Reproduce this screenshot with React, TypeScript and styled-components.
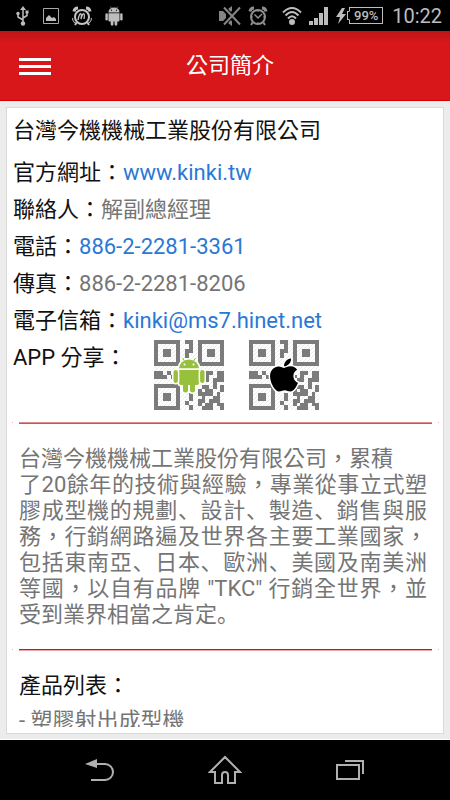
import React from "react";
import styled, { createGlobalStyle } from "styled-components";
import { FaApple } from "react-icons/fa";

const GlobalStyle = createGlobalStyle`
  *, *::before, *::after { box-sizing: border-box; }
  body {
    margin: 0;
    background: #000;
    font-family: Roboto, "Noto Sans CJK TC", sans-serif;
  }
`;

const Screen = styled.div`
  display: flex;
  flex-direction: column;
  height: 100vh;
`;

const StatusBar = styled.div`
  display: flex;
  flex: none;
  align-items: center;
  justify-content: space-between;
  height: 31px;
  padding: 0 8px 0 14px;
  background: #000;
  color: #bdbdbd;
`;

const StatusGroup = styled.div<{ $gap: number }>`
  display: flex;
  align-items: center;
  gap: ${(p) => p.$gap}px;
  svg { display: block; }
`;

const Battery = styled.span`
  display: flex;
  align-items: center;
  svg { margin-right: 3px; }
`;

const BatteryLevel = styled.span`
  position: relative;
  width: 34px;
  height: 17px;
  margin-right: 2px;
  border: 1px solid #bdbdbd;
  font-size: 13px;
  font-weight: 500;
  line-height: 15px;
  text-align: center;
  &::before {
    content: "";
    position: absolute;
    left: -3px;
    top: 3px;
    width: 3px;
    height: 9px;
    border: 1px solid #bdbdbd;
    border-right-color: #000;
    background: #000;
  }
`;

const Clock = styled.time`
  font-size: 20px;
  line-height: 24px;
`;

const AppBar = styled.header`
  display: flex;
  flex: none;
  align-items: center;
  gap: 10px;
  height: 70px;
  padding: 1px 51px 0 19px;
  border-bottom: 1px solid #d40000;
  background: linear-gradient(#bd1517, #d71719 12px);
`;

const MenuButton = styled.button`
  display: flex;
  flex-direction: column;
  flex: none;
  gap: 4px;
  width: 32px;
  padding: 0;
  border: 0;
  background: none;
`;

const MenuBar = styled.span`
  height: 3px;
  background: #fff;
`;

const Title = styled.h1`
  flex: 1;
  margin: 0;
  color: #fff;
  font-size: 22px;
  font-weight: 400;
  line-height: 32px;
  text-align: center;
`;

const Page = styled.main`
  display: flex;
  flex: 1;
  min-height: 0;
  padding: 6px 6px 5px 6px;
  border-bottom: 1px solid #fff;
  background: #ececec;
`;

const Card = styled.section`
  display: flex;
  flex: 1;
  min-width: 0;
  padding-bottom: 6px;
  border: 1px solid #dadada;
  background: #fff;
`;

const Scroller = styled.div`
  flex: 1;
  min-width: 0;
  overflow-y: auto;
  scrollbar-width: none;
  padding: 4px 5px 0 6px;
  color: #757575;
  font-size: 22px;
`;

const CompanyName = styled.h2`
  margin: 0 0 5px;
  color: #111;
  font-size: 22px;
  font-weight: 400;
  line-height: 37px;
`;

const Details = styled.dl`
  margin: 0;
`;

const DetailRow = styled.div`
  display: flex;
  line-height: 37px;
`;

const Label = styled.dt`
  color: #111;
`;

const Value = styled.dd`
  margin: 0;
`;

const Link = styled.a`
  color: #2a78d6;
  text-decoration: none;
`;

const ShareCodes = styled.dd`
  display: flex;
  gap: 25px;
  margin: 1px 0 0 27px;
`;

const CodeFrame = styled.span`
  position: relative;
  width: 70px;
  height: 70px;
  > svg { display: block; }
`;

const CodeLogo = styled.span`
  position: absolute;
  inset: 0;
  display: flex;
  align-items: center;
  justify-content: center;
  color: #000;
  svg {
    overflow: visible;
    stroke: #fff;
    paint-order: stroke;
  }
`;

const Divider = styled.div<{ $top: number }>`
  display: flex;
  gap: 7px;
  height: 2px;
  margin-top: ${(p) => p.$top}px;
  &::before, &::after {
    content: "";
    width: 1px;
    height: 1px;
    margin: 0 -1px;
    background: #f0b0b0;
  }
`;

const DividerLine = styled.span<{ $line: string; $shade: string }>`
  flex: 1;
  border-top: 1px solid ${(p) => p.$line};
  border-bottom: 1px solid ${(p) => p.$shade};
`;

const About = styled.p`
  margin: 22px 11px 0 6px;
  line-height: 26px;
  text-align: justify;
`;

const Mark = styled.span`
  font-family: Roboto, "Noto Sans CJK JP", sans-serif;
`;

const ProductsTitle = styled.h3`
  margin: 20px 6px 7px;
  color: #111;
  font-size: 22px;
  font-weight: 400;
  line-height: 30px;
`;

const Products = styled.ul`
  margin: 0 6px;
  padding: 0;
  list-style: none;
  line-height: 26px;
`;

const NavBar = styled.nav`
  display: grid;
  flex: none;
  grid-template-columns: repeat(3, 1fr);
  height: 60px;
  padding: 0 38px;
  background: #000;
`;

const NavButton = styled.button`
  display: flex;
  align-items: center;
  justify-content: center;
  padding: 0;
  border: 0;
  background: none;
`;

const Robot = ({ width, height, eye }: { width: number; height: number; eye: string }) => (
  <svg width={width} height={height} viewBox="0 0 32 36" fill="currentColor" strokeWidth="3">
    <path d="M6 11.500a10 9 0 0 1 20 0Z" />
    <path d="M6 13H26V26a2 2 0 0 1-2 2H22v5a2 2 0 0 1-5 0V28H15v5a2 2 0 0 1-5 0V28H8a2 2 0 0 1-2-2Z" />
    <rect x="0.500" y="13" width="4.400" height="13" rx="2.200" />
    <rect x="27.100" y="13" width="4.400" height="13" rx="2.200" />
    <path d="M9.500 1l2.500 4M22.500 1l-2.500 4" style={{ stroke: "currentColor" }} strokeWidth="1" />
    <g fill={eye} style={{ stroke: "none" }}>
      <circle cx="11.500" cy="7.500" r="1" />
      <circle cx="20.500" cy="7.500" r="1" />
    </g>
  </svg>
);

const UsbIcon = () => (
  <svg width="16" height="20" viewBox="0 0 16 20" fill="none" stroke="#bdbdbd" strokeWidth="1.500">
    <path d="M9 3V17M9 14L4 11V8M9 12L13 9.500V6" />
    <path d="M9 0l3 4H6Z" fill="#bdbdbd" stroke="none" />
    <circle cx="9" cy="17.500" r="2.200" fill="#bdbdbd" stroke="none" />
    <circle cx="4" cy="7.500" r="1.700" fill="#bdbdbd" stroke="none" />
    <path d="M11.500 4.500h3v3h-3z" fill="#bdbdbd" stroke="none" />
  </svg>
);

const PictureIcon = () => (
  <svg width="16" height="16" viewBox="0 0 16 16">
    <path d="M.5.5h15v15H.5z" fill="none" stroke="#a8a8a8" />
    <path d="M3 13V10l3-3 3 3 2-1 2 2v2Z" fill="#bdbdbd" />
  </svg>
);

const AlarmIcon = ({ promo }: { promo?: boolean }) => (
  <svg width="20" height="20" viewBox="0 0 20 20" fill="none" stroke={promo ? "#c4c4c4" : "#8f8f8f"} strokeWidth="2">
    <circle cx="10" cy="11" r="7" />
    <path d="M2 5.500A4 4 0 0 1 6 2M18 5.500A4 4 0 0 0 14 2" strokeWidth="3" />
    <path d="M4.500 16.500L3 19M15.500 16.500L17 19" />
    {promo ? (
      <>
        <path d="M6 14C7 9 8 7 9 8s0 4 0 5c1-4 2-6 3-5s0 4 0 5" strokeWidth="1.300" />
        <path d="M.7 12v2l2 3M19.300 12v2l-2 3" strokeWidth="1" />
      </>
    ) : (
      <>
        <path d="M6.500 8.500L10 12l4-4" strokeWidth="1.500" />
        <path d="M10 5v1M10 16v1M4 11h1M15 11h1" strokeWidth="1" />
      </>
    )}
  </svg>
);

const MuteIcon = () => (
  <svg width="22" height="20" viewBox="0 0 22 20" fill="#858585">
    <path d="M0 5H4L7 8V12L4 15H0ZM9 3l4-3v5l-2 1ZM9 17l4 3v-5l-2-1Z" />
    <path d="M5 1.500L21 18.500M21 1.500L5 18.500" stroke="#000" strokeWidth="4" />
    <path d="M5 1.500L21 18.500M21 1.500L5 18.500" stroke="#858585" strokeWidth="2" />
  </svg>
);

const WifiIcon = () => (
  <svg width="20" height="20" viewBox="0 0 20 20" fill="none" stroke="#bdbdbd" strokeWidth="2">
    <path d="M1 6.500Q10-2.500 19 6.500M3.500 9.500Q10 2.500 16.500 9.500M6 12.500Q10 8 14 12.500" />
    <circle cx="10" cy="16" r="3" fill="#bdbdbd" stroke="none" />
  </svg>
);

const SignalIcon = () => (
  <svg width="20" height="18" viewBox="0 0 20 18" fill="#bdbdbd">
    <path d="M0 14h4v4H0zM5 11h4v7H5zM10 6h4v12h-4zM15 0h4v18h-4z" />
  </svg>
);

const BoltIcon = () => (
  <svg width="10" height="16" viewBox="0 0 10 16" fill="#bdbdbd">
    <path d="M6 0L0 9h4L2 16 10 6H6L9 0Z" />
  </svg>
);

const modules = [
  "..##.##",
  "#.#..##",
  ".##.###",
  "....#..",
  ".##.#.#",
  "#.##..#",
  "####.#.",
  ".#..##.",
  "##.###.",
  "#.##.##",
  ".###..#",
];

const Finder = ({ x, y }: { x: number; y: number }) => (
  <g>
    <path d={`M${x + 2} ${y + 2}h22v22h-22z`} fill="none" stroke="#7b7b7b" strokeWidth="4" />
    <path d={`M${x + 9} ${y + 9}h8v8h-8z`} />
  </g>
);

const QrCode = ({ id }: { id: string }) => (
  <svg width="70" height="70" viewBox="0 0 70 70" fill="#7b7b7b">
    <pattern id={id} width="4" height="4" patternUnits="userSpaceOnUse">
      <path d="M0 4L4 0" stroke="#eaeaea" strokeWidth="1" />
    </pattern>
    <path d="M0 0h70v70H0z" fill={`url(#${id})`} />
    <Finder x={0} y={0} />
    <Finder x={44} y={0} />
    <Finder x={0} y={44} />
    <path d="M31 0h8v13h-4v5h-4V9h4V4h-4z" />
    <path d="M0 31h9v4h4v4H0zM13 31h4v4h-4zM17 35h3v4h-3z" />
    <path d="M35 53h4v5h-4zM31 61h4v4h-4zM35 65h4v5h-4zM35 57h4v4h-4z" />
    <g shapeRendering="crispEdges">
      {modules.map((row, r) =>
        [...row].map((m, c) =>
          m === "#" ? (
            <rect
              key={`${r}-${c}`}
              x={44 + (c * 26) / 7}
              y={31 + (r * 39) / 11}
              width={26 / 7}
              height={39 / 11}
            />
          ) : null
        )
      )}
    </g>
  </svg>
);

const GreenRobot = styled.span`
  display: flex;
  color: #97c03d;
`;

export default function App() {
  return (
    <Screen>
      <GlobalStyle />
      <StatusBar>
        <StatusGroup $gap={13}>
          <UsbIcon />
          <PictureIcon />
          <AlarmIcon promo />
          <Robot width={18} height={20} eye="#000" />
        </StatusGroup>
        <StatusGroup $gap={7}>
          <MuteIcon />
          <AlarmIcon />
          <span />
          <WifiIcon />
          <SignalIcon />
          <Battery>
            <BoltIcon />
            <BatteryLevel>99%</BatteryLevel>
          </Battery>
          <Clock>10:22</Clock>
        </StatusGroup>
      </StatusBar>

      <AppBar>
        <MenuButton aria-label="選單">
          <MenuBar />
          <MenuBar />
          <MenuBar />
        </MenuButton>
        <Title>公司簡介</Title>
      </AppBar>

      <Page>
        <Card>
          <Scroller>
            <CompanyName>台灣今機機械工業股份有限公司</CompanyName>
            <Details>
              <DetailRow>
                <Label>官方網址：</Label>
                <Value><Link href="http://www.kinki.tw">www.kinki.tw</Link></Value>
              </DetailRow>
              <DetailRow>
                <Label>聯絡人：</Label>
                <Value>解副總經理</Value>
              </DetailRow>
              <DetailRow>
                <Label>電話：</Label>
                <Value><Link href="tel:886-2-2281-3361">886-2-2281-3361</Link></Value>
              </DetailRow>
              <DetailRow>
                <Label>傳真：</Label>
                <Value>886-2-2281-8206</Value>
              </DetailRow>
              <DetailRow>
                <Label>電子信箱：</Label>
                <Value><Link href="mailto:kinki@ms7.hinet.net">kinki@ms7.hinet.net</Link></Value>
              </DetailRow>
              <DetailRow>
                <Label>APP 分享：</Label>
                <ShareCodes>
                  <CodeFrame>
                    <QrCode id="hatch-android" />
                    <CodeLogo>
                      <GreenRobot><Robot width={32} height={36} eye="#fff" /></GreenRobot>
                    </CodeLogo>
                  </CodeFrame>
                  <CodeFrame>
                    <QrCode id="hatch-apple" />
                    <CodeLogo>
                      <FaApple size={38} strokeWidth={40} />
                    </CodeLogo>
                  </CodeFrame>
                </ShareCodes>
              </DetailRow>
            </Details>

            <Divider $top={12}><DividerLine $line="#e08a8c" $shade="#d25053" /></Divider>

            <About>
              台灣今機機械工業股份有限公司，累積<br />
              了20餘年的技術與經驗，專業從事立式塑膠成型機的規劃<Mark>、</Mark>設計<Mark>、</Mark>製造<Mark>、</Mark>銷售與服務，行銷網路遍及世界各主要工業國家，包括東南亞<Mark>、</Mark>日本<Mark>、</Mark>歐洲<Mark>、</Mark>美國及南美洲等國，以自有品牌 "TKC" 行銷全世界，並受到業界相當之肯定<Mark>。</Mark>
            </About>

            <Divider $top={21}><DividerLine $line="#d0161a" $shade="#f0a5a7" /></Divider>

            <ProductsTitle>產品列表：</ProductsTitle>
            <Products>
              <li>- 塑膠射出成型機</li>
            </Products>
          </Scroller>
        </Card>
      </Page>

      <NavBar>
        <NavButton aria-label="返回">
          <svg width="30" height="22" viewBox="0 0 30 22" fill="none" stroke="#b0b0b0" strokeWidth="2">
            <path d="M10 5H20a8 8 0 0 1 0 16H6" />
            <path d="M0 5L12 0V9Z" fill="#b0b0b0" stroke="none" />
          </svg>
        </NavButton>
        <NavButton aria-label="首頁">
          <svg width="34" height="30" viewBox="0 0 34 30" fill="none" stroke="#b0b0b0" strokeWidth="2">
            <path d="M17 2L2 17H7V28H14V20a3 3 0 0 1 6 0V28H27V17H32Z" />
          </svg>
        </NavButton>
        <NavButton aria-label="最近使用">
          <svg width="28" height="20" viewBox="0 0 28 20" fill="none" stroke="#b0b0b0" strokeWidth="2">
            <path d="M1 5H23V19H1ZM9 1H27V14" />
          </svg>
        </NavButton>
      </NavBar>
    </Screen>
  );
}
